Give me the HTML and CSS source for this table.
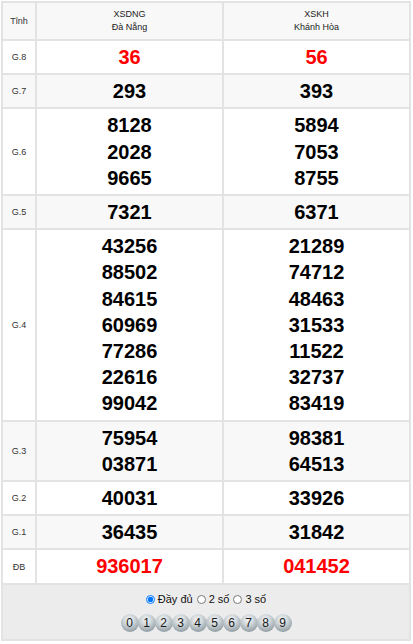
FILE: index.html
```html
<!DOCTYPE html>
<html lang="vi">
<head>
<meta charset="utf-8">
<title>Kết quả xổ số</title>
<link rel="stylesheet" href="styles.css">
</head>
<body>
<table class="kq">
  <thead>
    <tr class="row-alt">
      <th class="lbl">Tỉnh</th>
      <th class="prov">XSDNG<br>Đà Nẵng</th>
      <th class="prov">XSKH<br>Khánh Hòa</th>
    </tr>
  </thead>
  <tbody>
    <tr><td class="lbl">G.8</td><td class="num red">36</td><td class="num red">56</td></tr>
    <tr class="row-alt"><td class="lbl">G.7</td><td class="num">293</td><td class="num">393</td></tr>
    <tr><td class="lbl">G.6</td><td class="num">8128<br>2028<br>9665</td><td class="num">5894<br>7053<br>8755</td></tr>
    <tr class="row-alt"><td class="lbl">G.5</td><td class="num">7321</td><td class="num">6371</td></tr>
    <tr><td class="lbl">G.4</td><td class="num">43256<br>88502<br>84615<br>60969<br>77286<br>22616<br>99042</td><td class="num">21289<br>74712<br>48463<br>31533<br>11522<br>32737<br>83419</td></tr>
    <tr class="row-alt"><td class="lbl">G.3</td><td class="num">75954<br>03871</td><td class="num">98381<br>64513</td></tr>
    <tr><td class="lbl">G.2</td><td class="num">40031</td><td class="num">33926</td></tr>
    <tr class="row-alt"><td class="lbl">G.1</td><td class="num">36435</td><td class="num">31842</td></tr>
    <tr><td class="lbl">ĐB</td><td class="num red">936017</td><td class="num red">041452</td></tr>
    <tr class="row-ctrl">
      <td colspan="3" class="ctrl">
        <div class="opts">
          <label class="opt"><input type="radio" name="mode" checked>Đầy đủ</label>
          <label class="opt"><input type="radio" name="mode">2 số</label>
          <label class="opt"><input type="radio" name="mode">3 số</label>
        </div>
        <div class="balls">
          <span class="ball">0</span><span class="ball">1</span><span class="ball">2</span><span class="ball">3</span><span class="ball">4</span><span class="ball">5</span><span class="ball">6</span><span class="ball">7</span><span class="ball">8</span><span class="ball">9</span>
        </div>
      </td>
    </tr>
  </tbody>
</table>
</body>
</html>
```
FILE: styles.css
```css
html, body {
  margin: 0;
  padding: 0;
  background: #fff;
}
body {
  font-family: "Liberation Sans", Arial, sans-serif;
  color: #222;
}
.kq {
  border-collapse: collapse;
  width: 410px;
  margin: 1px 0 0 1px;
  table-layout: fixed;
  border: 2px solid #e3e3e3;
}
.kq th, .kq td {
  border: 2px solid #e3e3e3;
  padding: 0;
  text-align: center;
  vertical-align: middle;
}
.kq th.lbl { width: 32px; }
.row-alt { background: #f8f8f8; }
.lbl {
  font-size: 9px;
  font-weight: normal;
  color: #333;
}
.prov {
  font-size: 9px;
  font-weight: normal;
  line-height: 13px;
  color: #222;
  padding: 5px 0 !important;
  height: 26px;
}
.num {
  font-size: 20px;
  font-weight: bold;
  line-height: 26.2px;
  color: #000;
  padding: 3px 0 !important;
}
.num.red { color: #f00; }
.row-ctrl { background: #ececec; }
.ctrl { padding: 0 0 6px !important; }
.opts {
  display: flex;
  justify-content: center;
  align-items: center;
  gap: 4px;
  height: 29px;
  font-size: 11px;
  color: #111;
}
.opt {
  display: flex;
  align-items: center;
  gap: 3px;
}
.opt input {
  width: 9px;
  height: 9px;
  margin: 0;
}
.balls {
  display: flex;
  justify-content: center;
  height: 19px;
}
.ball {
  width: 18px;
  height: 18px;
  margin-left: -1px;
  border-radius: 50%;
  background: radial-gradient(circle at 45% 32%, #f4f6f7 0%, #cfd6da 35%, #9da8ae 70%, #6d7a82 100%);
  font-size: 12px;
  line-height: 18px;
  text-align: center;
  color: #1a1a1a;
}
.ball:first-child { margin-left: 0; }
```
